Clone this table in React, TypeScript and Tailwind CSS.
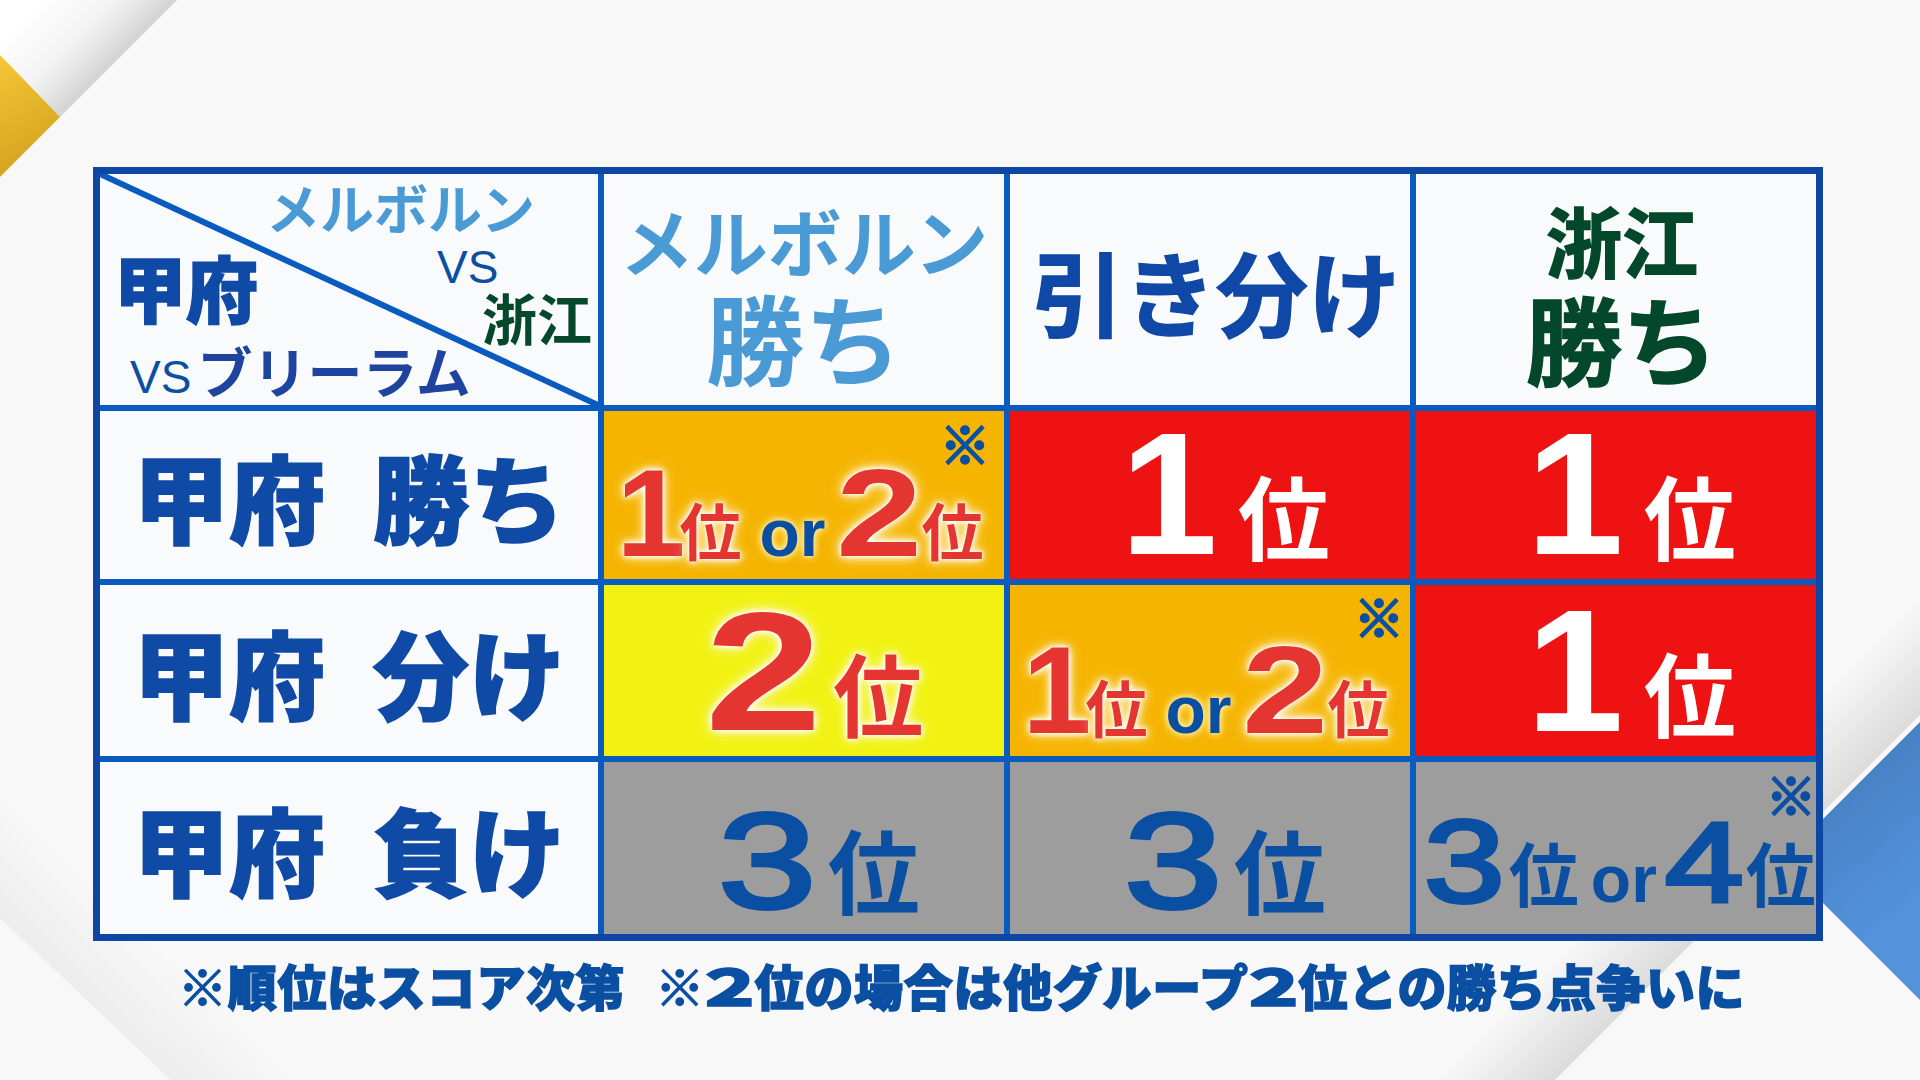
const jp = "font-['Noto_Sans_CJK_JP','Noto_Sans_CJK_SC',sans-serif]";
const num = "font-['Liberation_Sans',Arial,sans-serif]";
const glow = "[text-shadow:0_0_2px_#fff,0_0_5px_#fff,0_0_9px_#fff,0_0_14px_#fff6c8]";
const softGlow = "[text-shadow:0_0_6px_#fff3b0,0_0_10px_#fff3b0]";
const heavy = "[-webkit-text-stroke:1.5px_currentColor]";
const medium = "[-webkit-text-stroke:4px_currentColor]";

function Backdrop() {
  return (
    <svg
      className="pointer-events-none absolute inset-0 h-full w-full"
      viewBox="0 0 1920 1080"
      preserveAspectRatio="none"
    >
      <defs>
        <linearGradient id="tl" gradientUnits="userSpaceOnUse" x1="20" y1="20" x2="89" y2="89">
          <stop offset="0" stopColor="#ffffff" />
          <stop offset="0.55" stopColor="#f3f3f3" />
          <stop offset="1" stopColor="#d3d3d3" />
        </linearGradient>
        <linearGradient id="gold" gradientUnits="userSpaceOnUse" x1="0" y1="60" x2="60" y2="170">
          <stop offset="0" stopColor="#f3c636" />
          <stop offset="1" stopColor="#d09e1c" />
        </linearGradient>
        <linearGradient id="br" gradientUnits="userSpaceOnUse" x1="1257" y1="1257" x2="1317" y2="1317">
          <stop offset="0" stopColor="#f8f8f8" />
          <stop offset="1" stopColor="#dcdcdc" />
        </linearGradient>
        <linearGradient id="bl" gradientUnits="userSpaceOnUse" x1="0" y1="918" x2="64" y2="853">
          <stop offset="0" stopColor="#ececec" />
          <stop offset="1" stopColor="#f8f8f8" />
        </linearGradient>
        <linearGradient id="blue" gradientUnits="userSpaceOnUse" x1="1800" y1="760" x2="1920" y2="900">
          <stop offset="0" stopColor="#457abd" />
          <stop offset="1" stopColor="#5393dc" />
        </linearGradient>
      </defs>
      <polygon points="0,0 177,0 60,117 0,55" fill="url(#tl)" />
      <polygon points="0,55 60,117 0,177" fill="url(#gold)" />
      <polygon points="1395,1080 1555,1080 1920,715 1920,555" fill="url(#br)" />
      <polygon points="0,918 171,1080 291,1080 0,789" fill="url(#bl)" />
      <polygon points="1920,722 1781,861 1920,1000" fill="url(#blue)" />
    </svg>
  );
}

function Note({ pos }: { pos: string }) {
  return (
    <span className={`absolute leading-none text-[#0a4fa2] [-webkit-text-stroke:2.5px_#0a4fa2] ${jp} text-[50px] font-black ${pos}`}>
      ※
    </span>
  );
}

function OneOrTwo({ pos }: { pos: string }) {
  return (
    <div className="relative flex h-full flex-col items-center justify-end bg-[#f5b400] pb-[13px] pr-[8px]">
      <Note pos={pos} />
      <div className="flex items-baseline">
        <span className={`${num} ${glow} text-[124px] font-bold leading-[0.85] text-[#e53530]`}>1</span>
        <span className={`${jp} ${glow} -ml-[6px] text-[62px] font-bold leading-none text-[#e53530]`}>位</span>
        <span className={`${num} ${softGlow} ml-[18px] text-[66px] font-bold leading-[0.85] text-[#0a4fa2]`}>or</span>
        <span className={`${num} ${glow} ml-[10px] mr-[17px] inline-block origin-left scale-x-[1.25] text-[124px] font-bold leading-[0.85] text-[#e53530]`}>2</span>
        <span className={`${jp} ${glow} text-[62px] font-bold leading-none text-[#e53530]`}>位</span>
      </div>
    </div>
  );
}

function First() {
  return (
    <div className="flex h-full flex-col items-center justify-end bg-[#ee1212] pb-[10px]">
      <div className="flex items-baseline pl-[30px]">
        <span className={`${num} text-[175px] font-bold leading-[0.85] text-white`}>1</span>
        <span className={`${jp} ml-[20px] text-[92px] font-bold leading-none text-white`}>位</span>
      </div>
    </div>
  );
}

function Third() {
  return (
    <div className="flex h-full flex-col items-center justify-end bg-[#9d9d9d] pb-[14px]">
      <div className="flex items-baseline pl-[30px]">
        <span className={`${num} ${medium} mr-[22px] inline-block origin-left scale-x-[1.3] text-[136px] font-normal leading-[0.85] text-[#0a4fa2]`}>3</span>
        <span className={`${jp} ml-[12px] text-[92px] font-bold leading-none text-[#0a4fa2]`}>位</span>
      </div>
    </div>
  );
}

function RowLabel({ result }: { result: string }) {
  return (
    <div className={`flex items-center justify-center gap-[48px] bg-[#f9fafb] ${jp} ${heavy} text-[96px] font-black leading-none text-[#0f4aa6]`}>
      <span>甲府</span>
      <span>{result}</span>
    </div>
  );
}

export default function App() {
  return (
    <div className="relative h-[1080px] w-full overflow-hidden bg-[#f8f8f8]">
      <Backdrop />
      <div className="relative pl-[93px] pt-[167px]">
        <div className="w-fit border-[7px] border-[#0e47a3] bg-[#0a5bc0]">
          <div className="grid grid-cols-[498px_400px_400px_400px] grid-rows-[231px_168px_171px_172px] gap-[6px]">
            {/* corner cell with diagonal */}
            <div className="relative bg-[#f9fafb]">
              <svg className="absolute inset-0 h-full w-full" viewBox="0 0 498 231" preserveAspectRatio="none">
                <line x1="0" y1="0" x2="498" y2="231" stroke="#0a5bc0" strokeWidth="6" />
              </svg>
              <span className={`absolute left-[166px] top-[6px] ${jp} text-[54px] font-bold leading-none text-[#4a9ad6]`}>
                メルボルン
              </span>
              <span className={`absolute left-[337px] top-[70px] ${num} text-[46px] leading-none text-[#0a4fa2]`}>
                VS
              </span>
              <span className={`absolute right-[6px] top-[115px] ${jp} text-[55px] font-bold leading-none text-[#05482c]`}>
                浙江
              </span>
              <span className={`absolute left-[14px] top-[76px] ${jp} ${heavy} text-[72px] font-black leading-none text-[#0f4aa6]`}>
                甲府
              </span>
              <div className="absolute left-[30px] top-[168px] flex items-baseline">
                <span className={`${num} text-[46px] leading-none text-[#0a4fa2]`}>VS</span>
                <span className={`${jp} ml-[6px] text-[55px] font-bold leading-none text-[#1f44a0]`}>ブリーラム</span>
              </div>
            </div>

            <div className={`flex flex-col items-center justify-center gap-[10px] bg-[#f9fafb] pt-[6px] ${jp} font-bold leading-none text-[#4a9ad6]`}>
              <span className="text-[74px]">メルボルン</span>
              <span className="text-[98px]">勝ち</span>
            </div>
            <div className={`flex items-center justify-center bg-[#f9fafb] pl-[12px] ${jp} ${heavy} text-[92px] font-bold leading-none text-[#0f48a6]`}>
              引き分け
            </div>
            <div className={`flex flex-col items-center justify-center gap-[12px] bg-[#f9fafb] pl-[12px] pt-[6px] ${jp} font-bold leading-none text-[#03482a]`}>
              <span className={`${heavy} text-[76px]`}>浙江</span>
              <span className={`${heavy} text-[96px]`}>勝ち</span>
            </div>

            <RowLabel result="勝ち" />
            <OneOrTwo pos="right-[14px] top-[6px]" />
            <First />
            <First />

            <RowLabel result="分け" />
            <div className="flex h-full flex-col items-center justify-end bg-[#f1f211] pb-[12px]">
              <div className="flex items-baseline pl-[20px]">
                <span className={`${num} ${glow} mr-[23px] inline-block origin-left scale-x-[1.25] text-[168px] font-bold leading-[0.85] text-[#e53530]`}>2</span>
                <span className={`${jp} ${glow} ml-[12px] text-[90px] font-bold leading-none text-[#e53530]`}>位</span>
              </div>
            </div>
            <OneOrTwo pos="right-[6px] top-[5px]" />
            <First />

            <RowLabel result="負け" />
            <Third />
            <Third />
            <div className="relative flex h-full flex-col items-center justify-end bg-[#9d9d9d] pb-[22px] pl-[8px]">
              <Note pos="right-[0px] top-[6px]" />
              <div className="flex items-baseline">
                <span className={`${num} ${medium} mr-[16px] inline-block origin-left scale-x-[1.25] text-[116px] font-normal leading-[0.85] text-[#0a4fa2]`}>3</span>
                <span className={`${jp} ml-[4px] text-[70px] font-bold leading-none text-[#0a4fa2]`}>位</span>
                <span className={`${num} ml-[12px] text-[66px] font-bold leading-[0.85] text-[#0a4fa2]`}>or</span>
                <span className={`${num} ${medium} ml-[8px] mr-[16px] inline-block origin-left scale-x-[1.25] text-[113px] font-normal leading-[0.85] text-[#0a4fa2]`}>4</span>
                <span className={`${jp} ml-[2px] text-[70px] font-bold leading-none text-[#0a4fa2]`}>位</span>
              </div>
            </div>
          </div>
        </div>
        <p className={`mt-[19px] pl-[85px] ${jp} ${heavy} text-[49px] font-black leading-none tracking-[0.7px] text-[#0a4fa2]`}>
          ※順位はスコア次第
          <span className="ml-[30px]">
            ※<span className="inline-block scale-x-[1.5]">２</span>位の場合は他グループ<span className="inline-block scale-x-[1.5]">２</span>位との勝ち点争いに
          </span>
        </p>
      </div>
    </div>
  );
}
